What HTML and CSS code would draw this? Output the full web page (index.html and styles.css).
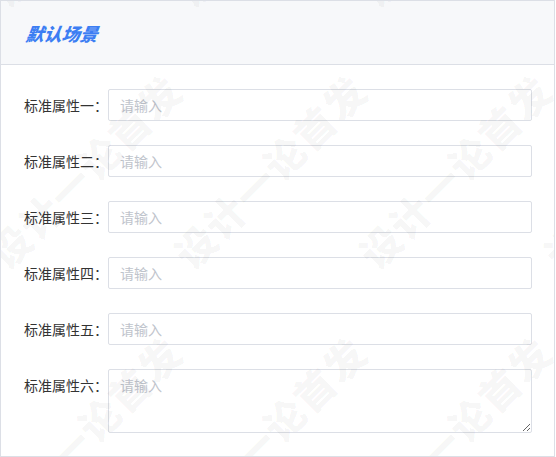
FILE: index.html
```html
<!DOCTYPE html>
<html>
<head>
    <title>默认场景</title>
    <link rel="stylesheet" href="styles.css">
</head>
<body>
    <div class="panel">
        <div class="panel-header">
            <h2>默认场景</h2>
        </div>

        <form class="panel-form" action="#" method="POST">
            <div class="form-row">
                <label for="attr1">标准属性一：</label>
                <input type="text" id="attr1" placeholder="请输入">
            </div>
            <div class="form-row">
                <label for="attr2">标准属性二：</label>
                <input type="text" id="attr2" placeholder="请输入">
            </div>
            <div class="form-row">
                <label for="attr3">标准属性三：</label>
                <input type="text" id="attr3" placeholder="请输入">
            </div>
            <div class="form-row">
                <label for="attr4">标准属性四：</label>
                <input type="text" id="attr4" placeholder="请输入">
            </div>
            <div class="form-row">
                <label for="attr5">标准属性五：</label>
                <input type="text" id="attr5" placeholder="请输入">
            </div>
            <div class="form-row">
                <label for="attr6">标准属性六：</label>
                <textarea id="attr6" placeholder="请输入"></textarea>
            </div>
        </form>

        <!-- watermark overlay -->
        <div class="watermark">
            <span>设计一论首发</span><span>设计一论首发</span><span>设计一论首发</span><span>设计一论首发</span><span>设计一论首发</span>
            <span>设计一论首发</span><span>设计一论首发</span><span>设计一论首发</span><span>设计一论首发</span><span>设计一论首发</span>
            <span>设计一论首发</span><span>设计一论首发</span><span>设计一论首发</span><span>设计一论首发</span><span>设计一论首发</span>
        </div>
    </div>
</body>
</html>
```

FILE: styles.css
```css
body {
    margin: 0;
    padding: 0;
    background-color: #fff;
    font-family: "Noto Sans CJK SC", "Noto Sans", sans-serif;
    color: #333;
}

.panel {
    position: relative;
    width: 555px;
    height: 457px;
    box-sizing: border-box;
    border: 1px solid #dcdfe6;
    overflow: hidden;
}

.panel-header {
    height: 64px;
    box-sizing: border-box;
    background-color: #f7f8fa;
    border-bottom: 1px solid #dcdfe6;
    display: flex;
    align-items: center;
    padding-left: 25px;
}

h2 {
    margin: 0;
    font-size: 18px;
    font-weight: 900;
    font-style: italic;
    color: #3c7ef3;
    line-height: 1;
    transform: skewX(-8deg);
}

.panel-form {
    display: flex;
    flex-direction: column;
    gap: 24px;
    padding: 24px 22px 23px 23px;
}

.form-row {
    display: flex;
    align-items: flex-start;
}

label {
    width: 84px;
    flex-shrink: 0;
    font-size: 14px;
    line-height: 32px;
    color: #333;
    white-space: nowrap;
}

input[type="text"],
textarea {
    flex: 1;
    margin: 0;
    box-sizing: border-box;
    border: 1px solid #dcdfe6;
    border-radius: 2px;
    background-color: #fff;
    font-family: inherit;
    font-size: 14px;
    color: #333;
    outline: none;
}

input[type="text"] {
    height: 32px;
    padding: 0 11px;
}

textarea {
    height: 64px;
    padding: 5px 11px;
    line-height: 21px;
    resize: vertical;
    display: block;
}

input::placeholder,
textarea::placeholder {
    color: #c0c4cc;
}

.watermark {
    position: absolute;
    top: -223px;
    left: -194px;
    display: grid;
    grid-template-columns: repeat(5, 185px);
    grid-auto-rows: 262px;
    pointer-events: none;
}

.watermark span {
    display: flex;
    align-items: center;
    justify-content: center;
    transform: rotate(-45deg);
    white-space: nowrap;
    font-size: 40px;
    font-weight: 900;
    letter-spacing: 2px;
    color: rgba(0, 0, 0, 0.045);
}
```
